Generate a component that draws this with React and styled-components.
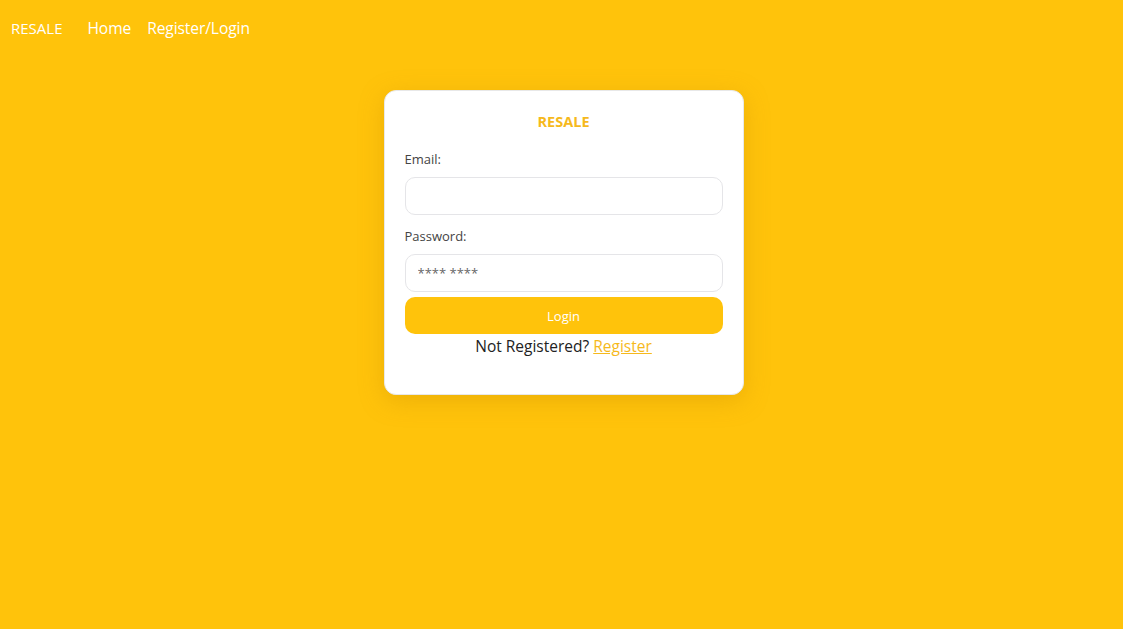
import React from "react";
import styled, { createGlobalStyle } from "styled-components";

const GlobalStyle = createGlobalStyle`
  html, body {
    margin: 0;
    padding: 0;
    background: #ffc30b;
    font-family: "Open Sans", "Noto Sans", sans-serif;
  }
  * { box-sizing: border-box; }
`;

const Page = styled.div`
  min-height: 629px;
  background: #ffc30b;
`;

const NavBar = styled.nav`
  display: flex;
  align-items: center;
  height: 56px;
  padding: 0 11px;
`;

const Brand = styled.a`
  color: #fff;
  font-size: 15px;
  text-decoration: none;
  margin-right: 25px;
`;

const NavLink = styled.a`
  color: #fff;
  font-size: 15.6px;
  text-decoration: none;
  margin-right: 16px;
  letter-spacing: -0.1px;
`;

const Main = styled.main`
  display: flex;
  justify-content: center;
  padding-top: 34px;
  padding-left: 4px;
`;

const Card = styled.form`
  width: 360px;
  background: #fff;
  border: 1px solid #e8e8e8;
  border-radius: 12px;
  box-shadow: 0 6px 24px rgba(200, 140, 0, 0.35);
  padding: 21px 20px 37px;
  display: flex;
  flex-direction: column;
`;

const Title = styled.h1`
  margin: 0 0 19px;
  text-align: center;
  font-size: 14.5px;
  font-weight: 700;
  color: #f6b91c;
`;

const Label = styled.label`
  font-size: 13px;
  color: #444;
  margin-bottom: 9px;
`;

const Input = styled.input`
  height: 38px;
  border: 1px solid #e5e5e8;
  border-radius: 10px;
  padding: 0 12px;
  font-size: 13px;
  font-family: inherit;
  margin-bottom: ${(p) => p.$gap}px;
  outline: none;

  &::placeholder {
    color: #666;
  }
`;

const Button = styled.button`
  height: 37px;
  border: none;
  border-radius: 10px;
  background: #ffc30b;
  color: #fff;
  font-size: 13px;
  font-family: inherit;
  cursor: pointer;
`;

const Footer = styled.p`
  margin: 1px 0 0;
  text-align: center;
  font-size: 15.5px;
  color: #222;

  a {
    color: #f6b91c;
    text-decoration: underline;
  }
`;

export default function App() {
  return (
    <Page>
      <GlobalStyle />
      <NavBar>
        <Brand href="#">RESALE</Brand>
        <NavLink href="#">Home</NavLink>
        <NavLink href="#">Register/Login</NavLink>
      </NavBar>
      <Main>
        <Card onSubmit={(e) => e.preventDefault()}>
          <Title>RESALE</Title>
          <Label>Email:</Label>
          <Input type="email" $gap={12} />
          <Label>Password:</Label>
          <Input type="password" placeholder="**** ****" $gap={5} />
          <Button type="submit">Login</Button>
          <Footer>
            Not Registered? <a href="#">Register</a>
          </Footer>
        </Card>
      </Main>
    </Page>
  );
}
